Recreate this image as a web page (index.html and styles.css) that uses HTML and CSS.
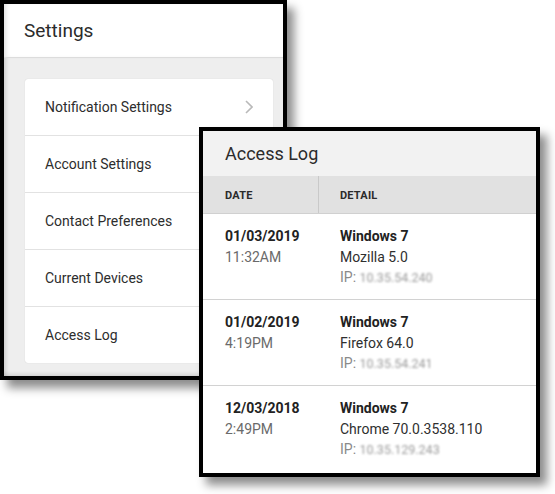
FILE: index.html
```html
<!DOCTYPE html>
<html>
<head>
<meta charset="utf-8">
<link rel="stylesheet" href="styles.css">
</head>
<body>
<div class="desktop">
  <section class="window settings-window">
    <header class="settings-head">Settings</header>
    <div class="settings-body">
      <ul class="menu-card">
        <li class="menu-item">Notification Settings
          <svg class="chev" width="8" height="14" viewBox="0 0 8 14"><path d="M1 1 L7 7 L1 13" fill="none" stroke="#b9b9b9" stroke-width="1.6"/></svg>
        </li>
        <li class="menu-item">Account Settings</li>
        <li class="menu-item">Contact Preferences</li>
        <li class="menu-item">Current Devices</li>
        <li class="menu-item">Access Log</li>
      </ul>
    </div>
  </section>

  <section class="window log-window">
    <header class="log-head">Access Log</header>
    <div class="log-table">
      <div class="log-row th">
        <div class="c-date">Date</div>
        <div class="c-detail">Detail</div>
      </div>
      <div class="log-row">
        <div class="c-date"><b>01/03/2019</b><span class="time">11:32AM</span></div>
        <div class="c-detail"><b>Windows 7</b><span>Mozilla 5.0</span><span class="ip">IP: <span class="blur">10.35.54.240</span></span></div>
      </div>
      <div class="log-row">
        <div class="c-date"><b>01/02/2019</b><span class="time">4:19PM</span></div>
        <div class="c-detail"><b>Windows 7</b><span>Firefox 64.0</span><span class="ip">IP: <span class="blur">10.35.54.241</span></span></div>
      </div>
      <div class="log-row last">
        <div class="c-date"><b>12/03/2018</b><span class="time">2:49PM</span></div>
        <div class="c-detail"><b>Windows 7</b><span>Chrome 70.0.3538.110</span><span class="ip">IP: <span class="blur">10.35.129.243</span></span></div>
      </div>
    </div>
  </section>
</div>
</body>
</html>
```

FILE: styles.css
```css
* { box-sizing: border-box; }
html, body { margin: 0; padding: 0; background: #fff; }
body { font-family: Roboto, "Liberation Sans", sans-serif; color: #2f2f2f; }

.desktop { position: relative; width: 555px; height: 494px; overflow: hidden; }

.window {
  position: absolute;
  border: 4px solid #000;
  background: #fff;
  box-shadow: 7px 8px 9px rgba(0,0,0,0.45);
  display: flex;
  flex-direction: column;
  overflow: hidden;
}

/* Settings window */
.settings-window { left: 0; top: 0; width: 287px; height: 380px; }
.settings-head {
  height: 54px;
  flex: none;
  padding: 0 0 0 20px;
  display: flex;
  align-items: center;
  font-size: 19px;
  color: #2b2b2b;
  border-bottom: 1px solid #dcdcdc;
  background: #fff;
  box-shadow: inset 4px 0 4px -2px rgba(0,0,0,0.12);
}
.settings-body {
  flex: 1;
  background: #eeeeee;
  padding: 21px 10px 13px 21px;
  box-shadow: inset 5px 0 4px -3px rgba(0,0,0,0.15), inset 0 -5px 4px -3px rgba(0,0,0,0.12);
}
.menu-card {
  list-style: none;
  margin: 0;
  padding: 0;
  background: #fff;
  border-radius: 3px;
  box-shadow: 0 0 1px rgba(0,0,0,0.18);
  height: 100%;
}
.menu-item {
  height: 57px;
  display: flex;
  align-items: center;
  justify-content: space-between;
  padding: 0 20px 0 20px;
  font-size: 14px;
  color: #2d2d2d;
  border-bottom: 1px solid #e2e2e2;
}
.menu-item:last-child { border-bottom: none; height: 56px; }
.chev { display: block; }

/* Access log window */
.log-window { left: 199px; top: 127px; width: 341px; height: 350px; }
.log-head {
  height: 45px;
  flex: none;
  background: #f2f2f2;
  padding-left: 22px;
  display: flex;
  align-items: center;
  font-size: 18px;
  color: #2b2b2b;
}
.log-table { flex: 1; display: flex; flex-direction: column; }
.log-row {
  display: grid;
  grid-template-columns: 116px 1fr;
  height: 86px;
  border-bottom: 1px solid #d2d2d2;
  font-size: 14px;
  line-height: 20.5px;
}
.log-row.last { border-bottom: none; }
.log-row.th {
  height: 38px;
  background: #e1e1e1;
  border-bottom: 1px solid #d0d0d0;
  font-size: 11px;
  font-weight: 700;
  text-transform: uppercase;
  color: #2b2b2b;
  letter-spacing: 0.2px;
  line-height: normal;
}
.log-row.th > div { display: flex; align-items: center; padding-top: 1px; }
.log-row.th .c-date { border-right: 1px solid #c9c9c9; }
.c-date { padding-left: 22px; }
.c-detail { padding-left: 21px; }
.log-row:not(.th) > div { padding-top: 12px; display: flex; flex-direction: column; }
.log-row b { font-weight: 700; color: #222; }
.time { color: #6a6a6a; }
.ip { color: #8a8a8a; }
.blur { color: #9a9a9a; filter: blur(1.2px); font-size: 12.5px; }
```
